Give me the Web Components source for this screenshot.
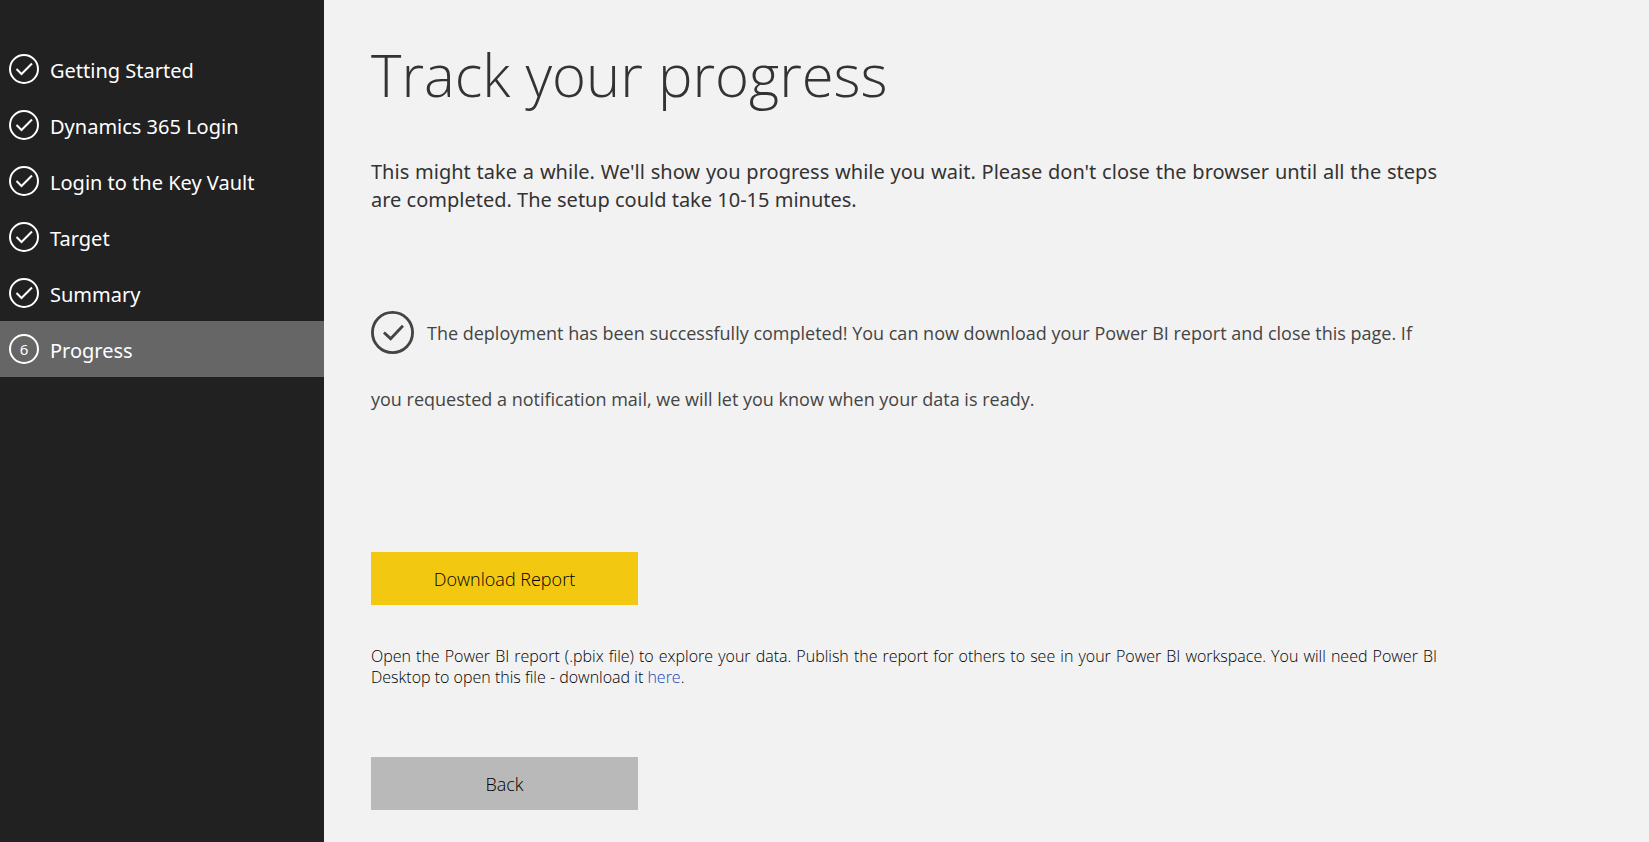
<!DOCTYPE html>
<html lang="en">
<head>
<meta charset="utf-8">
<meta name="viewport" content="width=device-width, initial-scale=1">
<title>Track your progress</title>
<style>
  html, body { margin: 0; }
  body { font-family: "Open Sans", "Noto Sans", sans-serif; background: #f2f2f2; color: #333; }
</style>
</head>
<body>
<setup-shell>
  <setup-nav slot="nav">
    <setup-step>Getting Started</setup-step>
    <setup-step>Dynamics 365 Login</setup-step>
    <setup-step>Login to the Key Vault</setup-step>
    <setup-step>Target</setup-step>
    <setup-step>Summary</setup-step>
    <setup-step number="6">Progress</setup-step>
  </setup-nav>
  <progress-page></progress-page>
</setup-shell>

<template id="shell">
  <style>
    :host { display: grid; grid-template-columns: 324px minmax(0, 1fr); min-height: 100vh; }
    main { padding: 36px 47px 32px; }
  </style>
  <slot name="nav"></slot>
  <main><slot></slot></main>
</template>

<template id="nav">
  <style>
    :host { display: block; background: #212121; color: #fff; font-family: "Noto Sans", "Open Sans", sans-serif; }
    nav { display: flex; flex-direction: column; padding-top: 41px; }
  </style>
  <nav aria-label="Setup steps"><slot></slot></nav>
</template>

<template id="step">
  <style>
    :host { display: block; }
    :host([number]) { background: #666; }
    a { display: flex; align-items: center; gap: 11px; height: 56px; padding-left: 9px; color: inherit; font-size: 20px; line-height: 28px; text-decoration: none; }
    span { padding-top: 4px; }
  </style>
  <a href="#"><check-badge></check-badge><span><slot></slot></span></a>
</template>

<template id="badge">
  <style>
    :host { display: inline-block; width: 30px; height: 30px; }
    svg { display: block; width: 100%; height: 100%; }
    circle, path { fill: none; stroke: currentColor; stroke-width: 2; }
    text { fill: currentColor; font-size: 15px; text-anchor: middle; }
  </style>
  <svg viewBox="0 0 30 30" aria-hidden="true"><circle cx="15" cy="15" r="14"/></svg>
</template>

<template id="button">
  <style>
    :host { display: block; width: 267px; }
    button { display: block; width: 100%; height: 53px; padding: 0; border: 0; background: var(--fill, #b9b9b9); color: #000; font: 300 18px/24px "Open Sans", "Noto Sans", sans-serif; cursor: pointer; }
  </style>
  <button type="button"><slot></slot></button>
</template>

<template id="page">
  <style>
    :host { display: block; max-width: 1066px; }
    h1 { margin: 0 0 44px; font-size: 58px; line-height: 78px; font-weight: 300; }
    p { margin: 0; }
    .intro { font-family: "Noto Sans", "Open Sans", sans-serif; font-size: 20px; line-height: 28px; text-align: justify; }
    .status { margin: 86px 0 120px; font-size: 18px; line-height: 66px; font-weight: 500; color: #444; }
    .status check-badge { width: 43px; height: 43px; margin-right: 13px; vertical-align: -14px; }
    .primary { --fill: #f2c811; }
    .hint { margin: 41px 0 69px; font-size: 16px; line-height: 21px; font-weight: 300; color: #000; text-align: justify; }
    a { color: #1846b8; text-decoration: none; }
  </style>
  <h1>Track your progress</h1>
  <p class="intro">This might take a while. We'll show you progress while you wait. Please don't close the browser until all the steps are completed. The setup could take 10-15 minutes.</p>
  <p class="status"><check-badge size="large"></check-badge>The deployment has been successfully completed! You can now download your Power BI report and close this page. If you requested a notification mail, we will let you know when your data is ready.</p>
  <action-button class="primary">Download Report</action-button>
  <p class="hint">Open the Power BI report (.pbix file) to explore your data. Publish the report for others to see in your Power BI workspace. You will need Power BI Desktop to open this file - download it <a href="#">here</a>.</p>
  <action-button>Back</action-button>
</template>

<script>
  const define = (name, id, setup) => customElements.define(name, class extends HTMLElement {
    constructor() {
      super();
      this.attachShadow({ mode: "open" }).append(document.getElementById(id).content.cloneNode(true));
    }
    connectedCallback() { if (setup) setup(this); }
  });
  const draw = (svg, name, attrs, text = "") => {
    const node = document.createElementNS("http://www.w3.org/2000/svg", name);
    for (const key in attrs) node.setAttribute(key, attrs[key]);
    node.textContent = text;
    svg.append(node);
  };

  define("check-badge", "badge", el => {
    const svg = el.shadowRoot.querySelector("svg");
    const number = el.getAttribute("number");
    if (number) draw(svg, "text", { x: 15, y: 21 }, number);
    else if (el.getAttribute("size") === "large") draw(svg, "path", { d: "M9 15l4.7 4.3 8.6-9" });
    else draw(svg, "path", { d: "M7.5 15l5 5L23 9.5" });
  });
  define("setup-step", "step", el => {
    if (!el.hasAttribute("number")) return;
    el.shadowRoot.querySelector("a").setAttribute("aria-current", "step");
    const badge = document.createElement("check-badge");
    badge.setAttribute("number", el.getAttribute("number"));
    el.shadowRoot.querySelector("check-badge").replaceWith(badge);
  });
  define("action-button", "button");
  define("progress-page", "page");
  define("setup-nav", "nav");
  define("setup-shell", "shell");
</script>
</body>
</html>
